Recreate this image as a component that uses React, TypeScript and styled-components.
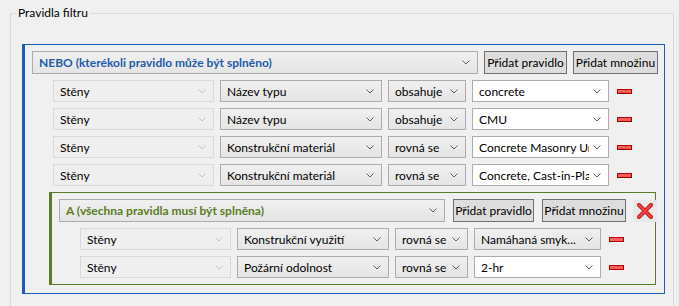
import styled, { createGlobalStyle } from "styled-components";

const GlobalStyle = createGlobalStyle`
  html, body {
    margin: 0;
    background: #f0f0f0;
  }
  body {
    font-family: Lato, "Noto Sans", sans-serif;
    font-size: 12px;
    color: #000;
  }
`;

type ComboKind = "disabled" | "normal" | "edit";

type RuleData = {
  field: string;
  op: string;
  value: string;
  valueKind: ComboKind;
};

const outerRules: RuleData[] = [
  { field: "Název typu", op: "obsahuje", value: "concrete", valueKind: "edit" },
  { field: "Název typu", op: "obsahuje", value: "CMU", valueKind: "edit" },
  { field: "Konstrukční materiál", op: "rovná se", value: "Concrete Masonry Units", valueKind: "edit" },
  { field: "Konstrukční materiál", op: "rovná se", value: "Concrete, Cast-in-Place", valueKind: "edit" },
];

const innerRules: RuleData[] = [
  { field: "Konstrukční využití", op: "rovná se", value: "Namáhaná smyk...", valueKind: "normal" },
  { field: "Požární odolnost", op: "rovná se", value: "2-hr", valueKind: "edit" },
];

function Chevron({ muted }: { muted?: boolean }) {
  return (
    <ChevronIcon width="8" height="5" viewBox="0 0 8 5">
      <path d="M0.5 0.5 L4 4 L7.5 0.5" fill="none" stroke={muted ? "#c4c4c4" : "#606060"} strokeWidth="1" />
    </ChevronIcon>
  );
}

function Combo({ kind, w, children }: { kind: ComboKind; w: number; children: React.ReactNode }) {
  return (
    <ComboBox $kind={kind} $w={w}>
      <ComboText>{children}</ComboText>
      <Chevron muted={kind === "disabled"} />
    </ComboBox>
  );
}

function MinusIcon() {
  return (
    <RemoveButton>
      <svg width="15" height="5" viewBox="0 0 15 5">
        <rect x="0.5" y="0.5" width="14" height="4" fill="#ff5c5c" stroke="#b00000" strokeWidth="1" />
      </svg>
    </RemoveButton>
  );
}

function CloseIcon() {
  return (
    <DeleteButton>
      <svg width="16" height="16" viewBox="0 0 16 16">
        <path d="M2 2 L14 14 M14 2 L2 14" stroke="#b81d1d" strokeWidth="4" strokeLinecap="round" />
        <path d="M2 2 L14 14 M14 2 L2 14" stroke="#f2403f" strokeWidth="2.4" strokeLinecap="round" />
      </svg>
    </DeleteButton>
  );
}

type Widths = { cat: number; field: number; op: number; value: number };

function Rule({ rule, widths }: { rule: RuleData; widths: Widths }) {
  return (
    <RuleRow>
      <Combo kind="disabled" w={widths.cat}>Stěny</Combo>
      <Combo kind="normal" w={widths.field}>{rule.field}</Combo>
      <Combo kind="normal" w={widths.op}>{rule.op}</Combo>
      <Combo kind={rule.valueKind} w={widths.value}>{rule.value}</Combo>
      <MinusIcon />
    </RuleRow>
  );
}

export default function App() {
  return (
    <>
      <GlobalStyle />
      <Page>
        <GroupBox>
          <Legend>Pravidla filtru</Legend>
          <SetPanel $tone="#1c5cba">
            <SetHeader $gap={6}>
              <HeaderCombo $w={446} $tone="#1f5aa9">
                <ComboText>NEBO (kterékoli pravidlo může být splněno)</ComboText>
                <Chevron />
              </HeaderCombo>
              <Button $w={83}>Přidat pravidlo</Button>
              <Button $w={85}>Přidat množinu</Button>
            </SetHeader>
            <Rules>
              {outerRules.map((r, i) => (
                <Rule key={i} rule={r} widths={{ cat: 161, field: 162, op: 78, value: 137 }} />
              ))}
            </Rules>
            <NestedSet $tone="#5b7b2b">
              <SetHeader $gap={8}>
                <HeaderCombo $w={386} $tone="#5a7d1f">
                  <ComboText>A (všechna pravidla musí být splněna)</ComboText>
                  <Chevron />
                </HeaderCombo>
                <Button $w={81}>Přidat pravidlo</Button>
                <Button $w={84}>Přidat množinu</Button>
                <CloseIcon />
              </SetHeader>
              <Rules>
                {innerRules.map((r, i) => (
                  <Rule key={i} rule={r} widths={{ cat: 151, field: 152, op: 73, value: 127 }} />
                ))}
              </Rules>
            </NestedSet>
          </SetPanel>
        </GroupBox>
      </Page>
    </>
  );
}

const Page = styled.div`
  padding: 5px 6px 0 10px;
  height: 306px;
  box-sizing: border-box;
  overflow: hidden;
`;

const GroupBox = styled.fieldset`
  margin: 0;
  border: 1px solid #dcdcdc;
  padding: 0 8px 0 11px;
  min-height: 320px;
  box-sizing: border-box;
`;

const Legend = styled.legend`
  margin-left: -6px;
  padding: 0 2px;
  line-height: 16px;
  color: #000;
`;

const SetPanel = styled.div<{ $tone: string }>`
  margin-top: 23px;
  border: 1px solid ${(p) => p.$tone};
  border-left-width: 3px;
  padding: 6px 6px 8px 7px;
`;

const NestedSet = styled.div<{ $tone: string }>`
  margin: 6px 0 0 17px;
  width: 607px;
  box-sizing: border-box;
  border: 1px solid ${(p) => p.$tone};
  border-left-width: 3px;
  padding: 6px 6px 6px 7px;
`;

const SetHeader = styled.div<{ $gap: number }>`
  display: flex;
  align-items: center;
  gap: ${(p) => p.$gap}px;
`;

const Rules = styled.div`
  display: flex;
  flex-direction: column;
  gap: 6px;
  margin-top: 6px;
  padding-left: 21px;
`;

const RuleRow = styled.div`
  display: flex;
  align-items: center;
  gap: 6px;
  height: 22px;
`;

const ComboBox = styled.div<{ $kind: ComboKind; $w: number }>`
  display: flex;
  align-items: center;
  box-sizing: border-box;
  width: ${(p) => p.$w}px;
  height: 22px;
  padding: 0 6px 0 6px;
  flex: none;
  border: 1px solid ${(p) => (p.$kind === "disabled" ? "#d9d9d9" : "#acacac")};
  background: ${(p) =>
    p.$kind === "edit"
      ? "#ffffff"
      : p.$kind === "disabled"
      ? "#efefef"
      : "linear-gradient(#f0f0f0, #e5e5e5)"};
  color: #000;
`;

const HeaderCombo = styled.div<{ $w: number; $tone: string }>`
  display: flex;
  align-items: center;
  box-sizing: border-box;
  width: ${(p) => p.$w}px;
  height: 23px;
  padding: 0 6px;
  flex: none;
  border: 1px solid #acacac;
  background: linear-gradient(#f0f0f0, #e5e5e5);
  color: ${(p) => p.$tone};
  font-weight: bold;
`;

const ComboText = styled.span`
  flex: 1;
  overflow: hidden;
  white-space: nowrap;
`;

const ChevronIcon = styled.svg`
  flex: none;
  margin-left: 4px;
  margin-right: 1px;
`;

const Button = styled.button<{ $w: number }>`
  box-sizing: border-box;
  width: ${(p) => p.$w}px;
  height: 23px;
  padding: 0;
  flex: none;
  border: 1px solid #707070;
  background: #dddddd;
  font: inherit;
  color: #000;
  white-space: nowrap;
`;

const RemoveButton = styled.div`
  display: flex;
  align-items: center;
  margin-left: 2px;
  flex: none;
`;

const DeleteButton = styled.div`
  display: flex;
  align-items: center;
  justify-content: center;
  width: 24px;
  height: 22px;
  margin-left: -1px;
  background: #e8e8e8;
  flex: none;
`;
